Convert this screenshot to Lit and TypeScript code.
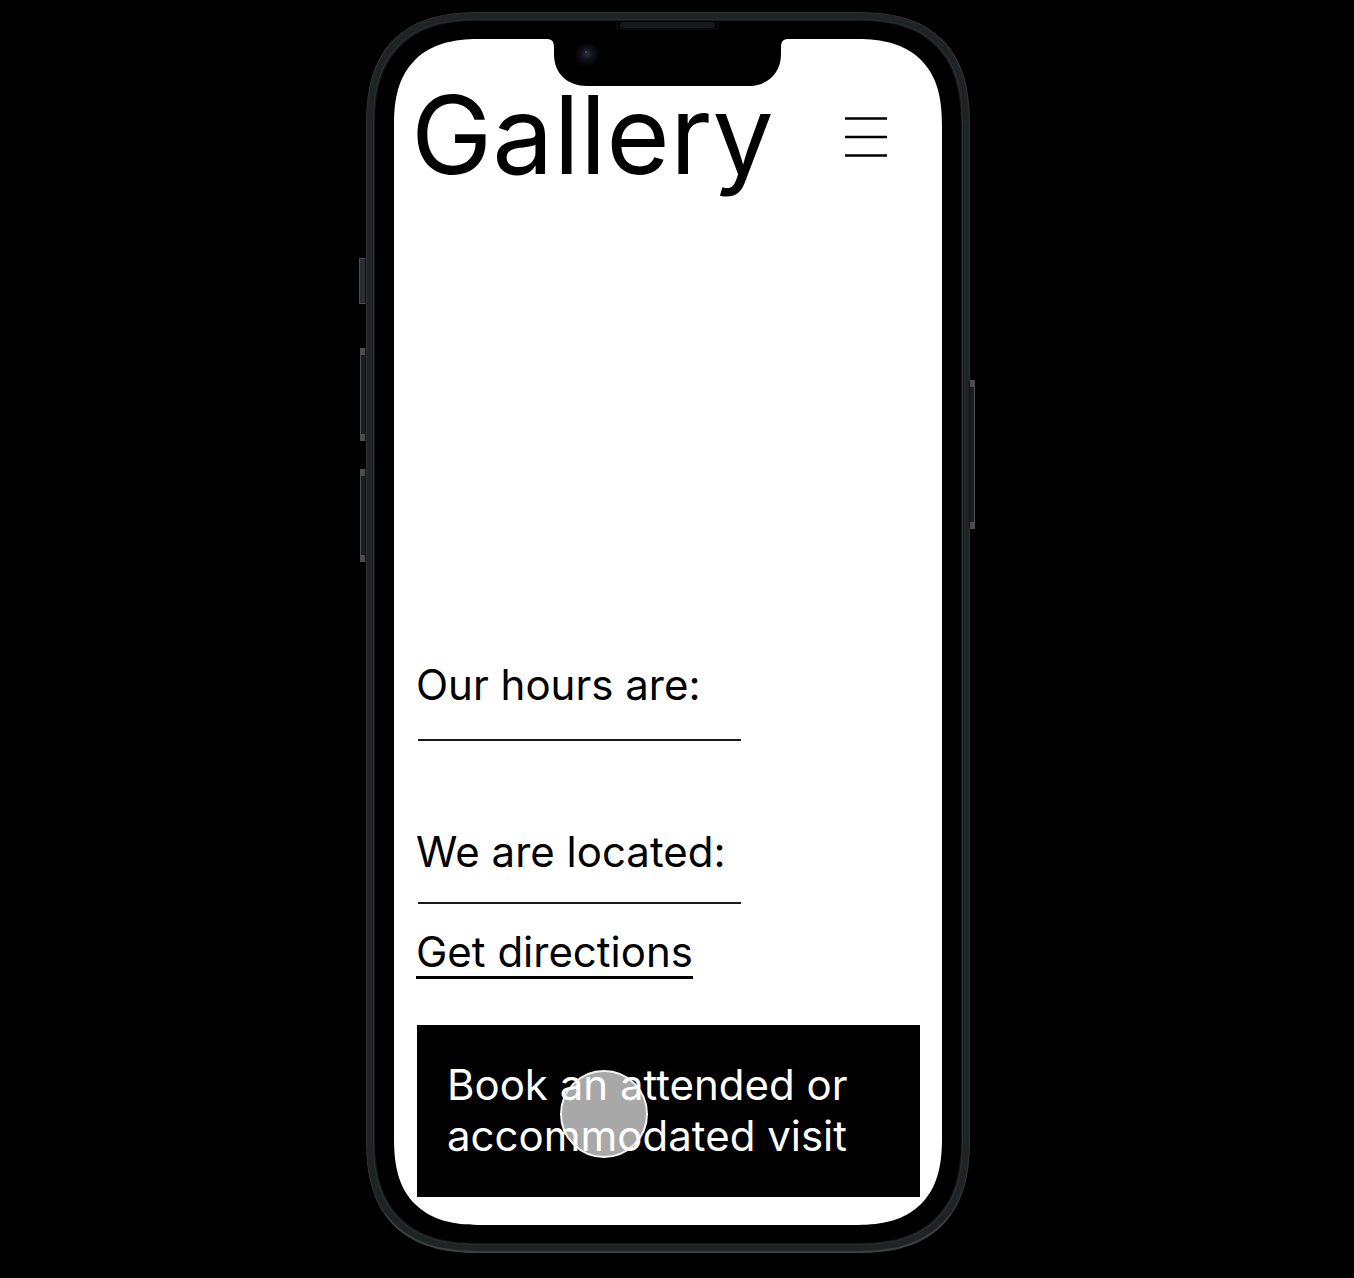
import { LitElement, html, css } from "lit";
import { customElement } from "lit/decorators.js";

/** Phone chassis: metal band, bezel, side keys, notch and a screen slot. */
@customElement("phone-frame")
export class PhoneFrame extends LitElement {
  static styles = css`
    :host {
      position: relative;
      display: flex;
      flex-direction: column;
      width: 100%;
      max-width: 604px;
    }
    .band {
      flex: 1;
      display: flex;
      flex-direction: column;
      box-sizing: border-box;
      padding: 8px;
      background: #202324;
      border: 1px solid #303435;
      border-bottom: 2px solid #3c4041;
      border-radius: 92px;
    }
    .bezel {
      position: relative;
      flex: 1;
      display: flex;
      flex-direction: column;
      padding: 18px 19px;
      background: #000;
      border-radius: 84px;
      box-shadow: 0 0 0 1px #141617, 0 0 0 2px #2a2e2f;
    }
    .screen {
      flex: 1;
      display: flex;
      flex-direction: column;
      overflow: hidden;
      background: #fff;
      border-radius: 70px;
    }
    @supports (corner-shape: superellipse(1.4)) {
      .band {
        border-radius: 116px;
        corner-shape: superellipse(1.35);
      }
      .bezel {
        border-radius: 107px;
        corner-shape: superellipse(1.35);
      }
      .screen {
        border-radius: 88px;
        corner-shape: superellipse(1.35);
      }
    }
    .notch {
      position: absolute;
      top: 0;
      left: 50%;
      margin-left: -122px;
    }
    .key {
      position: absolute;
      box-sizing: border-box;
      width: 6px;
      background: #1b1e1f;
      border: 1px solid #4a4e4f;
      border-right-color: #101212;
    }
    .mute {
      left: -7px;
      top: 246px;
      width: 7px;
      height: 46px;
      background: #2a2d2e;
    }
    .volume-up {
      left: -6px;
      top: 336px;
      height: 93px;
    }
    .volume-down {
      left: -6px;
      top: 457px;
      height: 93px;
    }
    .power {
      right: -5px;
      top: 368px;
      height: 149px;
      border-color: #4a4e4f;
      border-left-color: #101212;
    }
    .volume-up::before,
    .volume-up::after,
    .volume-down::before,
    .volume-down::after,
    .power::before,
    .power::after {
      content: "";
      position: absolute;
      left: 0;
      right: 0;
      height: 6px;
      background: #4a4e4f;
    }
    .key::before {
      top: 0;
    }
    .key::after {
      bottom: 0;
    }
  `;

  render() {
    return html`
      <span class="key mute"></span>
      <span class="key volume-up"></span>
      <span class="key volume-down"></span>
      <span class="key power"></span>
      <div class="band">
        <div class="bezel">
          <div class="screen"><slot></slot></div>
          <svg class="notch" width="243" height="66" viewBox="0 0 243 66" aria-hidden="true">
            <defs>
              <radialGradient id="lens">
                <stop offset="0" stop-color="#2c3140" />
                <stop offset="0.4" stop-color="#12141d" />
                <stop offset="1" stop-color="#000" />
              </radialGradient>
            </defs>
            <path
              d="M0 17 V18 C6 18 8 20 8 27 V33 C8 53 22 65 41 65 H202 C221 65 235 53 235 33 V27 C235 20 237 18 243 18 V17 Z"
              fill="#000"
            />
            <rect x="71" y="-2" width="101" height="10" fill="#000" stroke="#141617" />
            <rect x="74" y="1" width="95" height="6" rx="2" fill="#161819" />
            <circle cx="41" cy="33" r="13" fill="url(#lens)" />
            <circle cx="40" cy="31" r="1" fill="#4a5160" />
          </svg>
        </div>
      </div>
    `;
  }
}

@customElement("app-root")
export class AppRoot extends LitElement {
  static styles = css`
    :host {
      display: flex;
      justify-content: center;
      box-sizing: border-box;
      min-height: 100vh;
      padding: 12px 18px 25px 0;
      background: #000;
      color: #000;
      font-family: Inter, "Liberation Sans", sans-serif;
      font-size: 42px;
      line-height: 51px;
    }
    .page {
      flex: 1;
      display: flex;
      flex-direction: column;
      padding: 28px 22px;
    }
    .header {
      display: flex;
      align-items: center;
      justify-content: space-between;
      padding-right: 33px;
      margin-left: -5px;
    }
    .title {
      margin: 0;
      font-size: 109px;
      font-weight: 400;
      line-height: 134px;
    }
    .menu {
      display: flex;
      margin-top: 6px;
      padding: 0;
      border: 0;
      background: none;
      cursor: pointer;
    }
    .info {
      display: flex;
      flex-direction: column;
      align-items: flex-start;
      margin-top: auto;
    }
    .heading {
      margin: 0;
      font-size: 42px;
      font-weight: 400;
    }
    .rule {
      box-sizing: border-box;
      width: 64%;
      height: 2px;
      margin: 29px 0 0 2px;
      border: 0;
      background: #1a1a1a;
    }
    .place {
      margin: 85px 0 -4px;
    }
    .directions {
      margin: 24px 0 46px;
      color: inherit;
      text-decoration: none;
      border-bottom: 3px solid #000;
      line-height: 48px;
    }
    .book {
      position: relative;
      padding: 34px 30px 36px;
      margin-left: 1px;
      background: #000;
      border: 0;
      color: #fff;
      font: inherit;
      text-align: left;
      cursor: pointer;
    }
    .touch {
      position: absolute;
      left: 143px;
      top: 45px;
      box-sizing: border-box;
      width: 88px;
      height: 88px;
      border: 2px solid #f4f4f4;
      border-radius: 50%;
      background: rgba(255, 255, 255, 0.66);
    }
  `;

  render() {
    return html`
      <phone-frame>
        <main class="page">
          <header class="header">
            <h1 class="title">Gallery</h1>
            <button class="menu" type="button" aria-label="Menu">
              <svg width="42" height="40" viewBox="0 0 42 40" aria-hidden="true">
                <path d="M0 1.5H42M0 20H42M0 38.5H42" stroke="#000" stroke-width="2.6" />
              </svg>
            </button>
          </header>
          <section class="info">
            <h2 class="heading">Our hours are:</h2>
            <hr class="rule" />
            <h2 class="heading place">We are located:</h2>
            <hr class="rule" />
            <a class="directions" href="#directions">Get directions</a>
          </section>
          <button class="book" type="button">
            Book an attended or accommodated visit
            <span class="touch"></span>
          </button>
        </main>
      </phone-frame>
    `;
  }
}
